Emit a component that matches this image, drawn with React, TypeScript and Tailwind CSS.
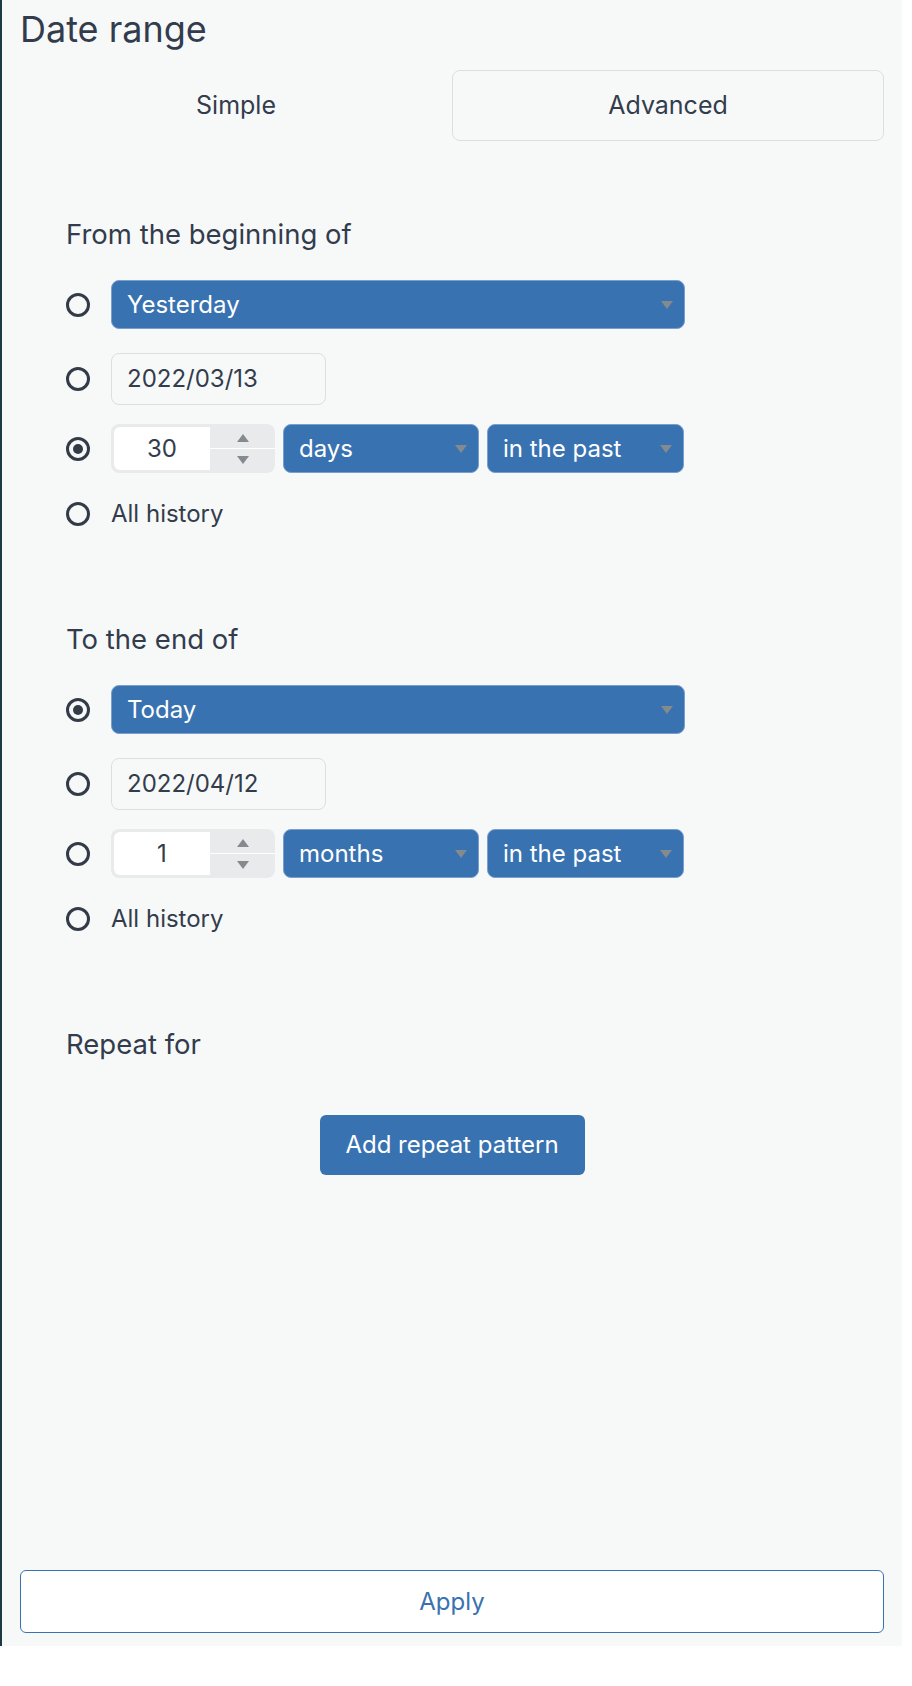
import React from "react";

const font = { fontFamily: "Inter, 'Noto Sans', sans-serif" };

// small grey triangle used by the selects and spinners
const Caret = ({ up = false, className = "" }: { up?: boolean; className?: string }) => (
  <svg width="12" height="8" viewBox="0 0 12 8" className={className}>
    <path d={up ? "M6 0 L12 8 L0 8 Z" : "M0 0 L12 0 L6 8 Z"} fill="#858a8f" />
  </svg>
);

const Radio = ({ checked = false }: { checked?: boolean }) => (
  <div className="w-[24px] h-[24px] rounded-full border-[3px] border-[#343b48] flex items-center justify-center shrink-0">
    {checked && <div className="w-[10px] h-[10px] rounded-full bg-[#343b48]" />}
  </div>
);

const Select = ({ label, width }: { label: string; width: string }) => (
  <div
    className={`${width} h-[49px] rounded-[8px] bg-[#3972b1] border border-[#7a9fcf] flex items-center justify-between pl-[15px] pr-[11px] text-white text-[24px]`}
  >
    <span>{label}</span>
    <Caret />
  </div>
);

const DateInput = ({ value }: { value: string }) => (
  <div className="w-[215px] h-[52px] rounded-[8px] border border-[#dcdfe2] flex items-center pl-[15px] text-[24px] text-[#333c4c]">
    {value}
  </div>
);

const NumberInput = ({ value }: { value: string }) => (
  <div className="w-[164px] h-[49px] rounded-[8px] bg-[#e9eaec] flex items-stretch p-[3px] pr-0">
    <div className="w-[96px] bg-white rounded-l-[6px] flex items-center justify-center text-[24px] text-[#333c4c]">
      {value}
    </div>
    <div className="flex-1 flex flex-col">
      <div className="flex-1 flex items-center justify-center border-b border-white">
        <Caret up />
      </div>
      <div className="flex-1 flex items-center justify-center">
        <Caret />
      </div>
    </div>
  </div>
);

const Row = ({ checked, children, className = "" }: { checked?: boolean; children: React.ReactNode; className?: string }) => (
  <div className={`flex items-center gap-[21px] ${className}`}>
    <Radio checked={checked} />
    {children}
  </div>
);

const RangeSection = ({
  heading,
  preset,
  presetChecked,
  date,
  dateChecked,
  amount,
  unit,
  amountChecked,
}: {
  heading: string;
  preset: string;
  presetChecked: boolean;
  date: string;
  dateChecked: boolean;
  amount: string;
  unit: string;
  amountChecked: boolean;
}) => (
  <div className="pl-[46px] flex flex-col">
    <h3 className="text-[27.5px] leading-[36px] text-[#333c4c]">{heading}</h3>
    <Row checked={presetChecked} className="mt-[28px]">
      <Select label={preset} width="w-[574px]" />
    </Row>
    <Row checked={dateChecked} className="mt-[24px]">
      <DateInput value={date} />
    </Row>
    <Row checked={amountChecked} className="mt-[19px]">
      <div className="flex gap-[8px]">
        <NumberInput value={amount} />
        <Select label={unit} width="w-[196px]" />
        <Select label="in the past" width="w-[197px]" />
      </div>
    </Row>
    <Row className="mt-[26px] h-[30px]">
      <span className="text-[24px] text-[#333c4c]">All history</span>
    </Row>
  </div>
);

export default function App() {
  return (
    <div className="w-[912px] h-[1686px] bg-white flex items-start" style={font}>
      <div className="w-[2px] h-[1646px] bg-[#1c3a44]" />
      <div className="w-[900px] h-[1646px] bg-[#f7f9f9] flex flex-col px-[18px] pb-[13px]">
        <h2 className="text-[36px] leading-[56px] mt-[1px] text-[#333c4c]">Date range</h2>

        <div className="grid grid-cols-2 h-[71px] mt-[13px] text-[25px] text-[#333c4c]">
          <div className="flex items-center justify-center">Simple</div>
          <div className="flex items-center justify-center border border-[#dcdfe2] rounded-[8px]">Advanced</div>
        </div>

        <div className="mt-[75px]">
          <RangeSection
            heading="From the beginning of"
            preset="Yesterday"
            presetChecked={false}
            date="2022/03/13"
            dateChecked={false}
            amount="30"
            unit="days"
            amountChecked={true}
          />
        </div>

        <div className="mt-[92px]">
          <RangeSection
            heading="To the end of"
            preset="Today"
            presetChecked={true}
            date="2022/04/12"
            dateChecked={false}
            amount="1"
            unit="months"
            amountChecked={false}
          />
        </div>

        <h3 className="pl-[46px] mt-[92px] text-[27.5px] leading-[36px] text-[#333c4c]">Repeat for</h3>

        <div className="flex justify-center mt-[53px]">
          <button className="w-[265px] h-[60px] rounded-[6px] bg-[#3972b1] text-white text-[24px]">
            Add repeat pattern
          </button>
        </div>

        <button className="mt-auto h-[63px] w-full rounded-[6px] border border-[#3972b1] bg-white text-[#3972b1] text-[24px]">
          Apply
        </button>
      </div>
    </div>
  );
}
